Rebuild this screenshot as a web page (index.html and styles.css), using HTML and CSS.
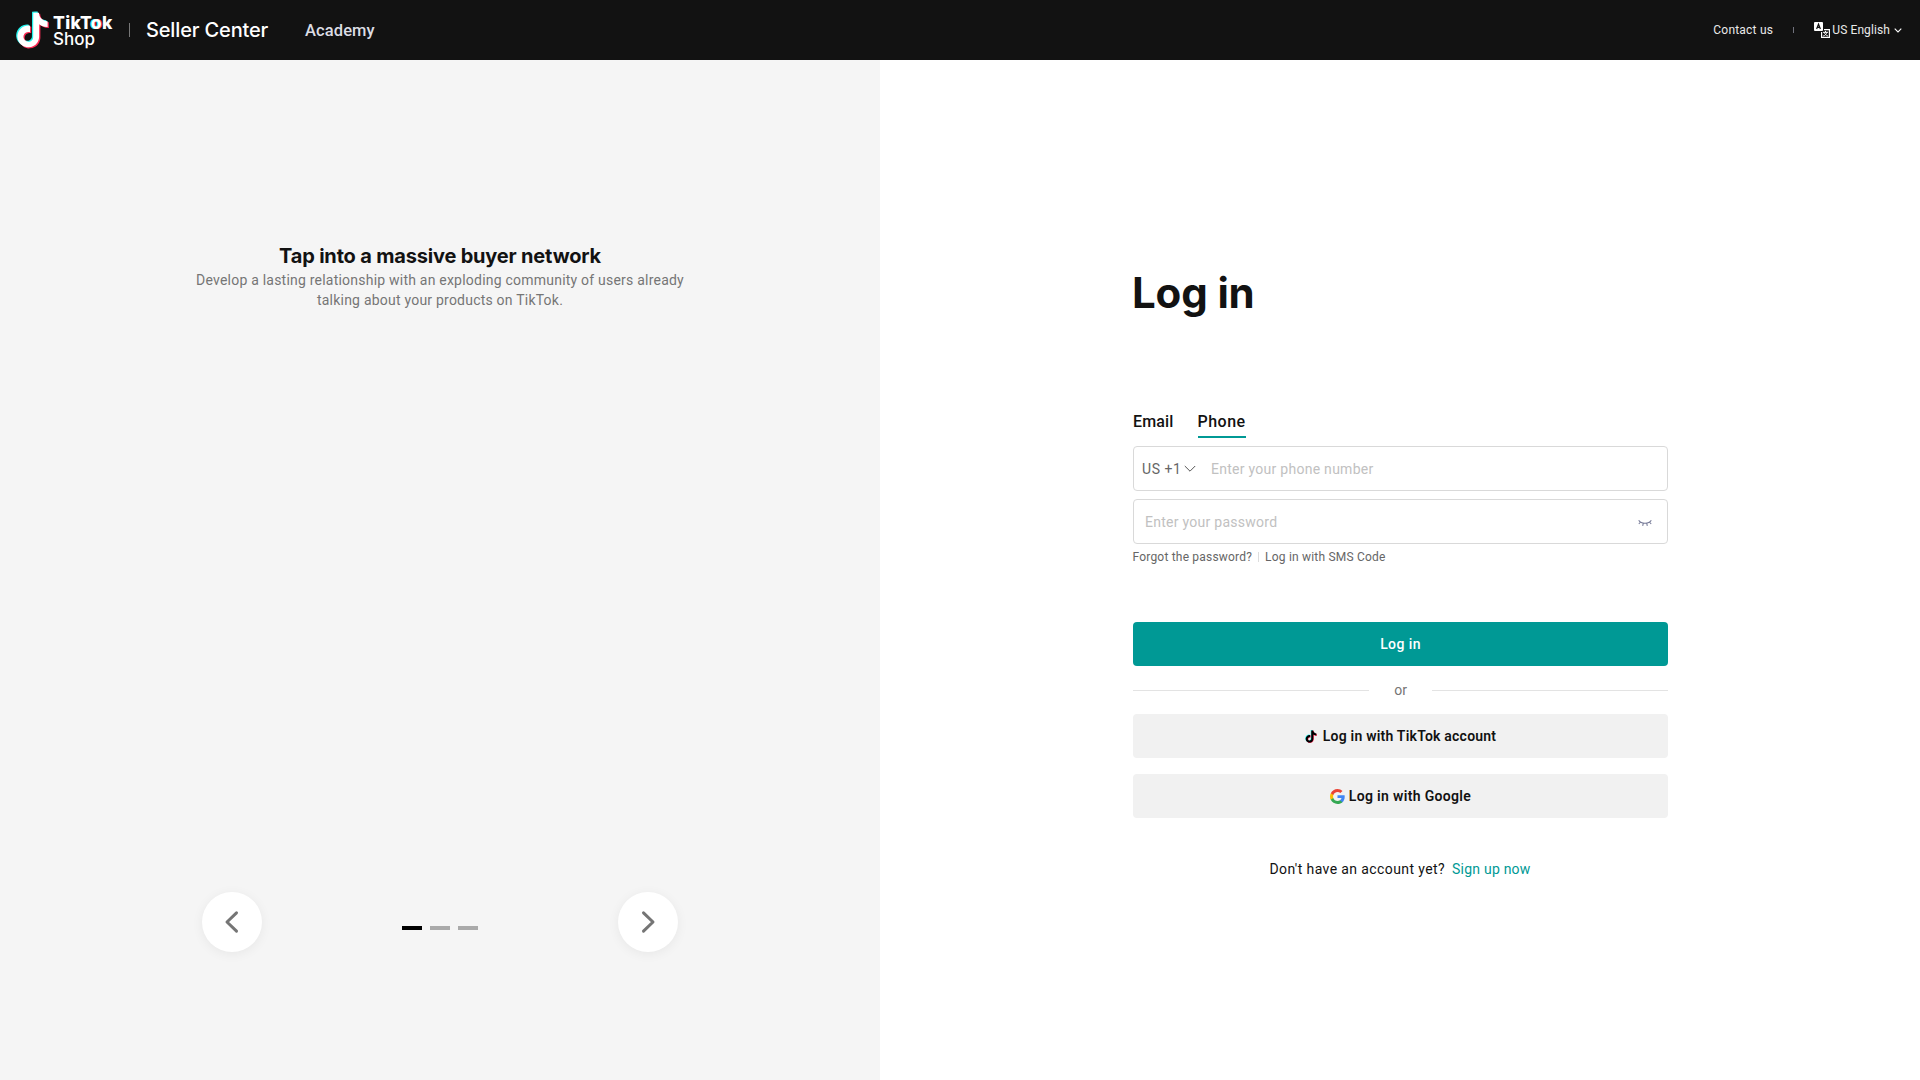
FILE: index.html
```html
<!DOCTYPE html>
<html lang="en">
<head>
<meta charset="utf-8">
<title>Seller Center</title>
<link rel="stylesheet" href="styles.css">
</head>
<body>
<svg class="defs" aria-hidden="true"><defs><path id="note" d="M12.525.02c1.31-.02 2.61-.01 3.91-.02.08 1.53.63 3.09 1.75 4.17 1.12 1.11 2.7 1.62 4.24 1.79v4.03c-1.44-.05-2.89-.35-4.2-.97-.57-.26-1.1-.59-1.62-.93-.01 2.92.01 5.84-.02 8.75-.08 1.4-.54 2.79-1.35 3.94-1.31 1.92-3.58 3.17-5.91 3.21-1.43.08-2.86-.31-4.08-1.03-2.02-1.19-3.44-3.37-3.65-5.71-.02-.5-.03-1-.01-1.49.18-1.9 1.12-3.72 2.58-4.96 1.66-1.44 3.98-2.13 6.15-1.72.02 1.48-.04 2.96-.04 4.44-.99-.32-2.15-.23-3.02.37-.63.41-1.11 1.04-1.36 1.75-.21.51-.15 1.07-.14 1.61.24 1.64 1.82 3.02 3.5 2.87 1.12-.01 2.19-.66 2.77-1.61.19-.33.4-.67.41-1.06.1-1.79.06-3.57.07-5.36.01-4.03-.01-8.05.02-12.07z"/></defs></svg>
<header class="header">
  <a class="logo">
    <svg class="logo-note" viewBox=".6 -.8 22.800 25.600"><use href="#note" x="-.85" y="-.7" fill="#25f4ee"/><use href="#note" x=".85" y=".7" fill="#fe2c55"/><use href="#note" fill="#fff"/></svg>
    <span class="wordmark"><span class="word-top">TikT<span class="word-o">o</span>k</span><span class="word-bottom">Shop</span></span>
  </a>
  <span class="rule"></span>
  <span class="product">Seller Center</span>
  <a class="academy">Academy</a>
  <nav class="tools">
    <a class="contact">Contact us</a>
    <span class="rule-small"></span>
    <a class="language">
      <svg class="lang-icon" viewBox="0 0 16 16"><rect width="9" height="9" rx="1" fill="#fff"/><path d="M2.600 7 4.500 2.200 6.400 7M3.300 5.400h2.400" fill="none" stroke="#121212" stroke-width="1.200"/><path d="M10 7.600h5.400v7.800H7.600V10" fill="none" stroke="#fff" stroke-width="1.200"/><path d="M9 10.300h5M11.500 8.900v1.400M9.200 14c2.200-.7 3.300-2 3.600-3.700M10.200 10.300c.5 1.700 1.800 3 3.700 3.700" fill="none" stroke="#fff"/></svg>
      <span>US English</span>
      <svg class="lang-arrow" viewBox="0 0 8 5"><path d="m.7.7 3.300 3.200L7.300.7" fill="none" stroke="#fff" stroke-width="1.100"/></svg>
    </a>
  </nav>
</header>
<main class="page">
  <section class="promo">
    <div class="promo-copy">
      <h2 class="promo-title">Tap into a massive buyer network</h2>
      <p class="promo-text">Develop a lasting relationship with an exploding community of users already<br>talking about your products on TikTok.</p>
    </div>
    <div class="carousel">
      <button class="arrow"><svg class="arrow-icon" viewBox="0 0 24 24"><path d="M16.500 2.800 7 12l9.500 9.200"/></svg></button>
      <div class="dots"><span class="dot active"></span><span class="dot"></span><span class="dot"></span></div>
      <button class="arrow"><svg class="arrow-icon" viewBox="0 0 24 24"><path d="m7.500 2.800 9.500 9.200-9.500 9.200"/></svg></button>
    </div>
  </section>
  <section class="login">
    <h1 class="title">Log in</h1>
    <div class="tabs"><a class="tab">Email</a><a class="tab selected">Phone</a></div>
    <div class="field phone">
      <span class="code">US +1</span>
      <svg class="code-arrow" viewBox="0 0 12 8"><path d="m.8 1 5.200 5.200L11.200 1" fill="none" stroke="#555" stroke-width="1"/></svg>
      <span class="hint">Enter your phone number</span>
    </div>
    <div class="field password">
      <span class="hint">Enter your password</span>
      <svg class="eye" viewBox="0 0 14 8"><path d="M.7 1.200C3.300 5.200 10.700 5.200 13.300 1.200M2.600 3 .8 5M5.300 4.200 4.700 6.800M8.700 4.200l.6 2.600M11.400 3l1.800 2" fill="none" stroke="#777b98" stroke-width="1.100"/></svg>
    </div>
    <div class="links"><a>Forgot the password?</a><span class="links-rule"></span><a>Log in with SMS Code</a></div>
    <button class="btn primary">Log in</button>
    <div class="or"><span class="or-text">or</span></div>
    <button class="btn tiktok"><svg class="tt-icon" viewBox=".6 -.8 22.800 25.600"><use href="#note" x="-1" y="-.8" fill="#25f4ee"/><use href="#note" x="1" y=".8" fill="#fe2c55"/><use href="#note" fill="#000"/></svg><span>Log in with TikTok account</span></button>
    <button class="btn google"><svg class="g-icon" viewBox="2 2 44 44"><path fill="#4285f4" d="M45.120 24.500c0-1.560-.14-3.060-.4-4.500H24v8.510h11.840c-.51 2.750-2.060 5.080-4.390 6.640v5.520h7.110c4.160-3.830 6.560-9.470 6.560-16.170z"/><path fill="#34a853" d="M24 46c5.940 0 10.920-1.970 14.560-5.330l-7.110-5.520c-1.970 1.320-4.490 2.100-7.450 2.100-5.730 0-10.580-3.870-12.310-9.070H4.340v5.700C7.960 41.070 15.400 46 24 46z"/><path fill="#fbbc05" d="M11.690 28.180C11.250 26.860 11 25.450 11 24s.25-2.860.69-4.180v-5.700H4.340C2.850 17.090 2 20.450 2 24s.85 6.910 2.340 9.880l7.350-5.700z"/><path fill="#ea4335" d="M24 10.750c3.230 0 6.130 1.110 8.410 3.290l6.310-6.310C34.910 4.180 29.930 2 24 2 15.400 2 7.960 6.930 4.340 14.120l7.350 5.700c1.730-5.200 6.580-9.070 12.310-9.070z"/></svg><span>Log in with Google</span></button>
    <p class="signup"><span class="question">Don't have an account yet?</span><a class="signup-link">Sign up now</a></p>
  </section>
</main>
</body>
</html>
```
FILE: styles.css
```css
* { box-sizing: border-box; }
body { margin: 0; font: 400 14px/20px Roboto, sans-serif; letter-spacing: .22px; color: #121212; background: #fff; }
h1, h2, p { margin: 0; }
button { border: 0; padding: 0; font: inherit; color: inherit; letter-spacing: inherit; }
svg { display: block; flex: none; }
.defs { position: absolute; width: 0; height: 0; }

.header { height: 60px; display: flex; align-items: center; background: #121212; color: #fff; padding: 0 18px 0 16px; }
.logo { display: flex; align-items: center; width: 113px; }
.logo-note { width: 33px; height: 38px; margin-right: 4px; }
.wordmark { display: flex; flex-direction: column; font-family: Inter, sans-serif; line-height: 16px; letter-spacing: 0; padding-top: 1px; }
.word-top { font-size: 17.5px; font-weight: 800; letter-spacing: .3px; }
.word-o { text-shadow: -1px 0 #25f4ee, 1px 0 #fe2c55; }
.word-bottom { font-size: 17px; font-weight: 500; }
.rule { width: 1px; height: 14px; margin-right: 16px; background: #777; }
.product { width: 159px; font: 500 20px/24px Inter, sans-serif; letter-spacing: -.15px; }
.academy { font-size: 16.5px; font-weight: 500; letter-spacing: .1px; color: #dcdde4; padding-top: 1px; }
.tools { margin-left: auto; display: flex; align-items: center; font-size: 12px; color: #e9e9e9; }
.contact { width: 80px; }
.rule-small { width: 1px; height: 6px; background: #70717c; margin-right: 20px; }
.language { display: flex; align-items: center; letter-spacing: .1px; }
.lang-icon { width: 16px; height: 16px; margin-right: 2px; }
.lang-arrow { width: 8px; height: 5px; margin-left: 4px; }

.page { display: flex; height: 1020px; }
.promo { width: 880px; background: #f5f5f5; display: flex; flex-direction: column; align-items: center; padding-top: 184px; }
.promo-copy { text-align: center; height: 648px; }
.promo-title { font: 700 20px/24px Inter, sans-serif; letter-spacing: -.185px; margin-bottom: 2px; }
.promo-text { color: #757575; }
.carousel { width: 476px; display: flex; justify-content: space-between; align-items: center; }
.arrow { width: 60px; height: 60px; border-radius: 50%; background: #fff; display: flex; align-items: center; justify-content: center; box-shadow: 0 2px 12px rgba(0, 0, 0, .06); }
.arrow-icon { width: 24px; height: 24px; fill: none; stroke: #757575; stroke-width: 3; stroke-linecap: round; stroke-linejoin: round; }
.dots { display: flex; gap: 8px; padding-top: 12px; }
.dot { width: 20px; height: 4px; background: #aaa; }
.dot.active { background: #000; }

.login { width: 535px; margin-left: 253px; padding-top: 205px; }
.title { font: 700 42px/56px Inter, sans-serif; letter-spacing: -.15px; margin-left: -1px; }
.tabs { display: flex; gap: 24px; margin: 88px 0 8px; }
.tab { height: 29px; padding-top: 3px; font-size: 16px; line-height: 19px; font-weight: 500; letter-spacing: .15px; }
.tab.selected { border-bottom: 2px solid #009995; letter-spacing: .48px; }
.field { height: 45px; border: 1px solid #d9d9d9; border-radius: 4px; display: flex; align-items: center; margin-bottom: 8px; }
.phone { padding-left: 8px; }
.code { width: 42px; color: #666; letter-spacing: .55px; }
.code-arrow { width: 12px; height: 8px; margin-right: 15px; }
.hint { color: #c1c1c1; letter-spacing: .27px; }
.password { padding: 0 15px 0 11px; justify-content: space-between; margin-bottom: 3px; }
.eye { width: 14px; height: 8px; margin-top: 3px; }
.links { display: flex; align-items: center; font-size: 12px; color: #666; height: 20px; margin: 0 0 55px -.5px; letter-spacing: .2px; }
.links-rule { width: 1px; height: 10px; background: #ddd; margin: 0 6px; }
.btn { width: 100%; height: 44px; display: flex; align-items: center; justify-content: center; border-radius: 4px; font-weight: 600; background: #f1f1f1; }
.primary { background: #009995; color: #fff; font-weight: 500; letter-spacing: .4px; }
.or { display: flex; align-items: center; gap: 25px; height: 48px; color: #757575; letter-spacing: 0; }
.or::before, .or::after { content: ""; flex: 1; height: 1px; background: #e3e3e3; }
.tiktok { margin-bottom: 16px; gap: 6px; }
.tt-icon { width: 12px; height: 13px; }
.google { gap: 4px; letter-spacing: .33px; }
.g-icon { width: 15px; height: 15px; }
.signup { display: flex; justify-content: center; gap: 7px; margin: 41px 0 0 -1px; }
.question { letter-spacing: .4px; }
.signup-link { color: #009995; }
```
